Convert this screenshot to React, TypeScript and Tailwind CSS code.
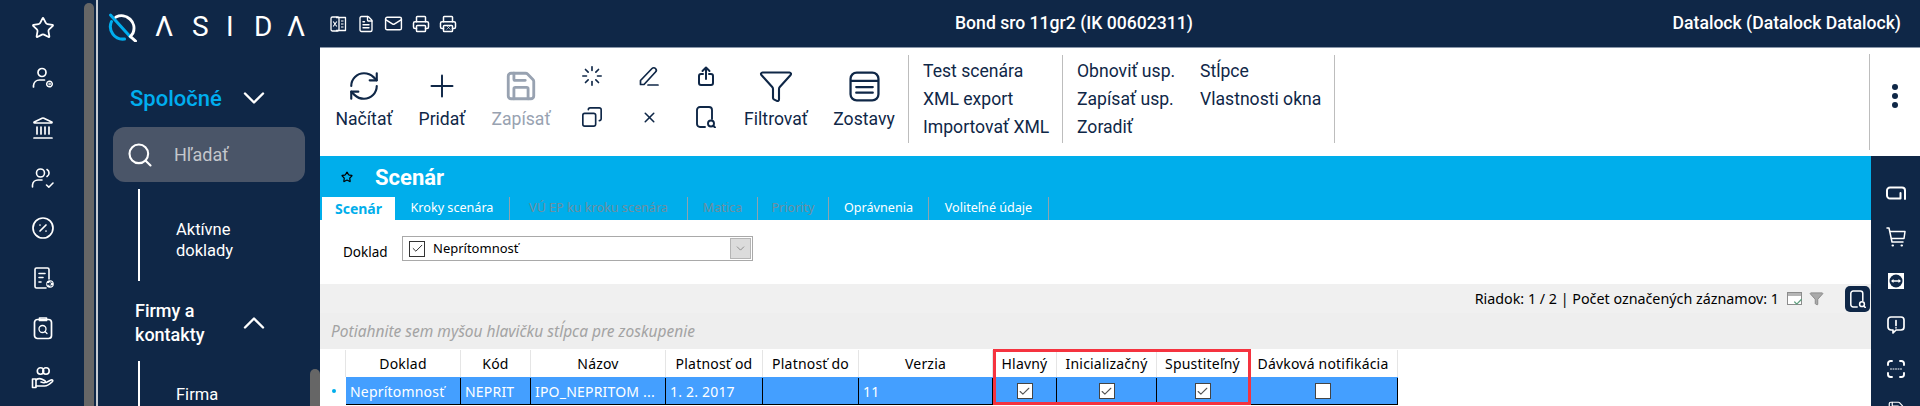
import {
  Star, Landmark, CirclePercent, ChevronDown, ChevronUp, Search,
  RefreshCw, Plus, Save, Loader, X, Funnel,
  FileText, Mail, Printer, Check, Copy,
} from "lucide-react";

const roboto = "font-['Roboto',sans-serif]";
const noto = "font-['Noto_Sans',sans-serif]";

function UserGear() {
  return (
    <svg viewBox="0 0 24 24" className="w-6 h-6" fill="none" stroke="currentColor" strokeWidth="1.7" strokeLinecap="round">
      <circle cx="11" cy="6.5" r="4" />
      <path d="M2.5 21v-1.5A6 6 0 0 1 8.5 14h5" />
      <circle cx="18.500" cy="18" r="2.800" strokeWidth="1.500" strokeDasharray="2 0.600" />
      <circle cx="18.500" cy="18" r="0.800" strokeWidth="1" />
    </svg>
  );
}

function UserTick() {
  return (
    <svg viewBox="0 0 24 24" className="w-6 h-6" fill="none" stroke="currentColor" strokeWidth="1.6" strokeLinecap="round" strokeLinejoin="round">
      <circle cx="9.5" cy="7" r="4" />
      <path d="M16 3.5a4 4 0 0 1 0 7" />
      <path d="M1.5 21v-2A5.5 5.5 0 0 1 7 14h4" />
      <path d="M15.5 19l2.3 2.2L22 17" />
    </svg>
  );
}

function ReceiptEuro() {
  return (
    <svg viewBox="0 0 24 24" className="w-6 h-6" fill="none" stroke="currentColor" strokeWidth="1.6" strokeLinecap="round" strokeLinejoin="round">
      <path d="M18 13V3.500A1.500 1.500 0 0 0 16.500 2h-11A1.500 1.500 0 0 0 4 3.500v17A1.500 1.500 0 0 0 5.500 22H15" />
      <path d="M8 7.500h6M8 11.500h4M8 16h2" />
      <circle cx="19" cy="18" r="3.800" fill="currentColor" stroke="none" />
      <path d="M21 16.300a2 2 0 1 0 0 3.400M16.500 17.500h3M16.500 18.700h3" stroke="#0f2747" strokeWidth="0.900" />
    </svg>
  );
}

function ClipboardSearch() {
  return (
    <svg viewBox="0 0 24 24" className="w-6 h-6" fill="none" stroke="currentColor" strokeWidth="1.7" strokeLinecap="round" strokeLinejoin="round">
      <rect x="3.500" y="3.500" width="17" height="19" rx="3" />
      <path d="M8.500 4.500V2h7v2.500h-7z" />
      <circle cx="11.500" cy="13" r="3.500" strokeWidth="1.300" />
      <path d="M14 15.500l2 2" strokeWidth="1.300" />
    </svg>
  );
}

function HandCircles() {
  return (
    <svg viewBox="0 0 24 24" className="w-6 h-6" fill="none" stroke="currentColor" strokeWidth="1.600" strokeLinecap="round" strokeLinejoin="round">
      <circle cx="9.500" cy="5" r="3.200" />
      <circle cx="15" cy="5" r="3.200" />
      <rect x="1.500" y="13" width="3.500" height="8.500" />
      <path d="M5 14c2-1.500 4-1.700 6-.7l2.500 1.200c1.500.7.800 2.500-.8 2.200L10 16M5 20h8.500c2 0 6-2.500 8-4.500.8-1-.2-2-1.500-1.500l-5 2.500" />
    </svg>
  );
}

function DocSearch({ className }: { className: string }) {
  return (
    <svg viewBox="0 0 20 22" className={className} fill="none" stroke="currentColor" strokeWidth="1.900" strokeLinecap="round" strokeLinejoin="round">
      <path d="M9 21H4a3 3 0 0 1-3-3V4a3 3 0 0 1 3-3h9a3 3 0 0 1 3 3v9" />
      <circle cx="15" cy="17.500" r="3" />
      <path d="M17.500 20l1.500 1.500" />
    </svg>
  );
}

function PenUnderline() {
  return (
    <svg viewBox="0 0 20 20" className="w-[20px] h-[20px]" fill="none" stroke="currentColor" strokeWidth="1.700" strokeLinecap="round" strokeLinejoin="round">
      <path d="M1.500 14.500L13 2.500a2.400 2.400 0 0 1 3.500 3.500L5 18.500H1.500v-4z" />
      <path d="M9 19h10" />
    </svg>
  );
}

function ShareBox() {
  return (
    <svg viewBox="0 0 16 20" className="w-[16px] h-[20px]" fill="none" stroke="currentColor" strokeWidth="2" strokeLinecap="round" strokeLinejoin="round">
      <path d="M5 8H3a2 2 0 0 0-2 2v7a2 2 0 0 0 2 2h10a2 2 0 0 0 2-2v-7a2 2 0 0 0-2-2h-2" />
      <path d="M8 13V1.500M4.500 5L8 1.500 11.500 5" />
    </svg>
  );
}

function Lines() {
  return (
    <svg viewBox="0 0 30 30" className="w-[31px] h-[31px]" fill="none" stroke="currentColor" strokeWidth="2.200" strokeLinecap="round">
      <rect x="1.500" y="1.500" width="27" height="27" rx="6" />
      <path d="M2 9.500h26M7 15.500h16M7 21h16" />
    </svg>
  );
}

function XlsFile() {
  return (
    <svg viewBox="0 0 18 18" className="w-[18px] h-[18px]" fill="none" stroke="currentColor" strokeWidth="1.300" strokeLinejoin="round">
      <path d="M6 2.500h9.500v13H6" />
      <rect x="1" y="2" width="8" height="14" rx="1.500" />
      <path d="M3.200 6.500l3.600 5M6.800 6.500l-3.600 5M11 6h2.500M11 9h2.500M11 12h2.500" strokeWidth="1.100" />
    </svg>
  );
}

function PrinterX() {
  return (
    <span className="relative flex">
      <Printer className="w-[18px] h-[18px]" strokeWidth={2} />
      <X className="absolute left-[6px] top-[9px] w-[7px] h-[7px]" strokeWidth={2} />
    </span>
  );
}

function Tablet() {
  return (
    <svg viewBox="0 0 20 14" className="w-[20px] h-[14px]" fill="none" stroke="currentColor" strokeWidth="2" strokeLinecap="round" strokeLinejoin="round">
      <path d="M19 13V4.500A3 3 0 0 0 16 1.500H4A3 3 0 0 0 1 4.500v5A3 3 0 0 0 4 12.500h10.500V7" />
    </svg>
  );
}

function Cart() {
  return (
    <svg viewBox="0 0 20 20" className="w-[20px] h-[20px]" fill="none" stroke="currentColor" strokeWidth="1.500" strokeLinecap="round" strokeLinejoin="round">
      <path d="M1 1h2l3 14h11" />
      <path d="M4 4.500h15l-1 7H5.500" />
      <path d="M6.500 18.500h.5M15.500 18.500h.5" strokeWidth="2" />
    </svg>
  );
}

function RemoteBadge() {
  return (
    <svg viewBox="0 0 16 16" className="w-[16px] h-[16px]">
      <rect width="16" height="16" fill="#fff" />
      <circle cx="8" cy="8" r="6.500" fill="#0f2747" />
      <path d="M3 8l2.500-2v1.300h5V6L13 8l-2.500 2V8.700h-5V10z" fill="#fff" />
    </svg>
  );
}

function Bubble() {
  return (
    <svg viewBox="0 0 18 18" className="w-[18px] h-[18px]" fill="none" stroke="currentColor" strokeWidth="1.700" strokeLinecap="round" strokeLinejoin="round">
      <path d="M4 1h10a3 3 0 0 1 3 3v7a3 3 0 0 1-3 3H9l-3 3v-3H4a3 3 0 0 1-3-3V4a3 3 0 0 1 3-3z" />
      <path d="M9 4.500v5M9 11.800v.01" />
    </svg>
  );
}

function ScanDots() {
  return (
    <svg viewBox="0 0 18 18" className="w-[18px] h-[18px]" fill="none" stroke="currentColor" strokeWidth="1.900" strokeLinecap="round">
      <path d="M1 5V3.500A2.500 2.500 0 0 1 3.500 1H5M13 1h1.500A2.500 2.500 0 0 1 17 3.500V5M17 13v1.500a2.500 2.500 0 0 1-2.500 2.500H13M5 17H3.500A2.500 2.500 0 0 1 1 14.500V13" />
      <path d="M3.500 9h11" strokeWidth="1" strokeDasharray="1 1.500" />
    </svg>
  );
}

function BigButton({ icon, label, width, muted }: { icon: React.ReactNode; label: string; width: string; muted?: boolean }) {
  return (
    <div className={`${width} shrink-0 flex flex-col items-center ${muted ? "text-[#98a2b1]" : "text-[#0f2747]"}`}>
      <div className="h-[32px] mt-[22px] flex items-center justify-center">{icon}</div>
      <span className="mt-[5px] text-[17.600px] leading-[24px]">{label}</span>
    </div>
  );
}

function SmallButtons({ width, top, bottom }: { width: string; top: React.ReactNode; bottom: React.ReactNode }) {
  return (
    <div className={`${width} shrink-0 flex flex-col items-center text-[#0f2747] pt-[17px]`}>
      <div className="h-[22px] flex items-center">{top}</div>
      <div className="h-[22px] mt-[19px] flex items-center">{bottom}</div>
    </div>
  );
}

function TextColumn({ items, width }: { items: string[]; width: string }) {
  return (
    <div className={`${width} shrink-0 flex flex-col pt-[9px] text-[#0f2747] text-[17.600px] leading-[28px]`}>
      {items.map((t) => (
        <span key={t} className="whitespace-nowrap">{t}</span>
      ))}
    </div>
  );
}

const logoLetters = [
  { ch: "Λ", w: "w-[37px]" },
  { ch: "S", w: "w-[34px]" },
  { ch: "I", w: "w-[28px]" },
  { ch: "D", w: "w-[33px]" },
  { ch: "Λ", w: "w-[21px]" },
];

const tabs = [
  { label: "Kroky scenára", w: "w-[115px]" },
  { label: "VÚ EP ku kroku scenára", w: "w-[178px]", off: true },
  { label: "Matica", w: "w-[70px]", off: true },
  { label: "Priority", w: "w-[71px]", off: true },
  { label: "Oprávnenia", w: "w-[100px]" },
  { label: "Voliteľné údaje", w: "w-[120px]" },
];

const columns = [
  { label: "Doklad", w: "w-[115px]", value: "Neprítomnosť" },
  { label: "Kód", w: "w-[70px]", value: "NEPRIT" },
  { label: "Názov", w: "w-[135px]", value: "IPO_NEPRITOM ..." },
  { label: "Platnosť od", w: "w-[97px]", value: "1. 2. 2017" },
  { label: "Platnosť do", w: "w-[96px]", value: "" },
  { label: "Verzia", w: "w-[134px]", value: "11" },
];

const checks = [
  { label: "Hlavný", w: "w-[64px]", on: true },
  { label: "Inicializačný", w: "w-[100px]", on: true },
  { label: "Spustiteľný", w: "w-[92px]", on: true },
  { label: "Dávková notifikácia", w: "w-[149px]", on: false },
];

function CheckCell({ on, w }: { on: boolean; w: string }) {
  return (
    <div className={`${w} shrink-0 h-full flex items-center justify-center border-r border-black`}>
      <span className="w-[16px] h-[16px] bg-white border border-[#444] flex items-center justify-center text-[#555]">
        {on && <Check className="w-[13px] h-[13px]" strokeWidth={2} />}
      </span>
    </div>
  );
}

export default function App() {
  return (
    <div className={`w-[1920px] h-[406px] overflow-hidden flex bg-[#0f2747] text-white ${roboto}`}>
      {/* Icon rail */}
      <aside className="w-[96px] h-full shrink-0 flex relative">
        <div className="w-[84px] flex flex-col items-center gap-[26px] pt-[16px] pl-[2px]">
          <Star className="w-6 h-6" strokeWidth={1.8} />
          <UserGear />
          <Landmark className="w-6 h-6" strokeWidth={1.7} />
          <UserTick />
          <CirclePercent className="w-6 h-6" strokeWidth={1.7} />
          <ReceiptEuro />
          <ClipboardSearch />
          <HandCircles />
        </div>
        <div className="w-[10px] h-[420px] mt-[3px] rounded-t-[5px] bg-[#666666]" />
      </aside>
      <div className="w-[2px] h-full shrink-0 bg-[#c7ccd3]" />

      {/* Module menu */}
      <nav className="w-[222px] h-full shrink-0 relative">
        <div className="flex items-center h-[48px] pl-[10px] pt-[6px]">
          <svg viewBox="0 0 30 30" className="w-[30px] h-[30px] shrink-0" fill="none" strokeWidth="3" strokeLinecap="round">
            <path d="M3.500 9.500a12.500 12.500 0 0 0 13 17.500" stroke="#00aeef" />
            <path d="M2.500 3l20 22" stroke="#00aeef" />
            <path d="M8 5a12.500 12.500 0 0 1 17 16l-2.500 3.500 5 4.500" stroke="#ffffff" />
          </svg>
          <div className="ml-[17px] flex text-[28px] leading-none whitespace-nowrap">
            {logoLetters.map((l, i) => (
              <span key={i} className={`${l.w} shrink-0`}>{l.ch}</span>
            ))}
          </div>
        </div>
        <div className="flex items-center pl-[32px] mt-[36px] h-[28px]">
          <span className="w-[106px] text-[22px] font-medium text-[#00aeef] whitespace-nowrap">Spoločné</span>
          <ChevronDown className="w-[36px] h-[36px] shrink-0" strokeWidth={1.600} />
        </div>
        <div className="ml-[15px] mt-[15px] w-[192px] h-[55px] rounded-[12px] bg-[#4a5568] flex items-center pl-[13px]">
          <Search className="w-[28px] h-[28px]" strokeWidth={1.8} />
          <span className="ml-[20px] text-[18px] text-[#c4c7cc]">Hľadať</span>
        </div>
        <div className="ml-[40px] mt-[7px] h-[92px] border-l-2 border-white pl-[36px] pt-[30px] text-[16.500px] leading-[21px]">
          Aktívne<br />doklady
        </div>
        <div className="flex items-center pl-[37px] mt-[18px]">
          <span className="w-[101px] text-[18px] leading-[24px] font-medium">Firmy a<br />kontakty</span>
          <ChevronUp className="w-[36px] h-[36px] shrink-0" strokeWidth={1.600} />
        </div>
        <div className="ml-[40px] mt-[14px] h-[60px] border-l-2 border-white pl-[36px] pt-[23px] text-[16.500px] leading-[21px]">
          Firma
        </div>
        <div className="absolute right-0 top-[369px] w-[10px] h-[60px] rounded-t-[5px] bg-[#666666]" />
      </nav>

      {/* Main */}
      <main className="flex-1 min-w-0 h-full flex flex-col">
        <header className="h-[48px] shrink-0 border-b border-[#8a97aa] flex items-center text-[17.600px] font-medium">
          <div className="w-[635px] pl-[10px] flex items-center gap-[9px] shrink-0">
            <XlsFile />
            <FileText className="w-[18px] h-[18px]" strokeWidth={1.800} />
            <Mail className="w-[19px] h-[19px]" strokeWidth={1.800} />
            <Printer className="w-[18px] h-[18px]" strokeWidth={2} />
            <PrinterX />
          </div>
          <span className="whitespace-nowrap">Bond sro 11gr2 (IK 00602311)</span>
          <span className="ml-auto pr-[19px] whitespace-nowrap">Datalock (Datalock Datalock)</span>
        </header>

        <div className="h-[108px] shrink-0 bg-white flex">
          <BigButton width="w-[88px]" label="Načítať" icon={<RefreshCw className="w-[34px] h-[34px]" strokeWidth={1.500} />} />
          <BigButton width="w-[68px]" label="Pridať" icon={<Plus className="w-[36px] h-[36px]" strokeWidth={1.300} />} />
          <BigButton width="w-[90px]" muted label="Zapísať" icon={<Save className="w-[34px] h-[34px]" strokeWidth={2} />} />
          <SmallButtons width="w-[52px]" top={<Loader className="w-[22px] h-[22px]" strokeWidth={1.800} />} bottom={<Copy className="w-[22px] h-[22px] -scale-x-100" strokeWidth={1.800} />} />
          <SmallButtons width="w-[62px]" top={<PenUnderline />} bottom={<X className="w-[17px] h-[17px]" strokeWidth={2.200} />} />
          <SmallButtons width="w-[52px]" top={<ShareBox />} bottom={<DocSearch className="w-[20px] h-[22px]" />} />
          <BigButton width="w-[88px]" label="Filtrovať" icon={<Funnel className="w-[36px] h-[36px]" strokeWidth={1.400} />} />
          <BigButton width="w-[88px]" label="Zostavy" icon={<Lines />} />
          <div className="w-px h-[88px] mt-[7px] shrink-0 bg-[#bdbdbd]" />
          <div className="w-[14px] shrink-0" />
          <TextColumn width="w-[139px]" items={["Test scenára", "XML export", "Importovať XML"]} />
          <div className="w-px h-[88px] mt-[7px] shrink-0 bg-[#bdbdbd]" />
          <div className="w-[14px] shrink-0" />
          <TextColumn width="w-[123px]" items={["Obnoviť usp.", "Zapísať usp.", "Zoradiť"]} />
          <TextColumn width="w-[134px]" items={["Stĺpce", "Vlastnosti okna"]} />
          <div className="w-px h-[88px] mt-[7px] shrink-0 bg-[#bdbdbd]" />
          <div className="ml-auto w-[51px] h-[96px] mt-[6px] border-l border-[#bdbdbd] flex flex-col items-center pt-[30px] gap-[3px]">
            <span className="w-[6px] h-[6px] rounded-full bg-[#0f2747]" />
            <span className="w-[6px] h-[6px] rounded-full bg-[#0f2747]" />
            <span className="w-[6px] h-[6px] rounded-full bg-[#0f2747]" />
          </div>
        </div>

        <div className="flex-1 min-h-0 flex">
          <section className="flex-1 min-w-0 bg-white text-black">
            {/* Title and tabs */}
            <div className="h-[64px] bg-[#00aeeb] flex flex-col">
              <div className="h-[41px] flex items-center pl-[21px]">
                <Star className="w-[12px] h-[12px] text-black" strokeWidth={2.400} />
                <span className="ml-[22px] mt-[1px] text-white text-[22px] font-bold">Scenár</span>
              </div>
              <div className={`flex h-[23px] text-[12.600px] ${noto}`}>
                <div className="w-[2px]" />
                <div className="w-[73px] bg-white text-[#00aeeb] text-[14px] font-bold flex items-center justify-center">Scenár</div>
                {tabs.map((t) => (
                  <div key={t.label} className={`${t.w} shrink-0 h-full border-r border-[#8fa3ae] flex items-center justify-center whitespace-nowrap ${t.off ? "text-[#6f8ea0]" : "text-white"}`}>
                    {t.label}
                  </div>
                ))}
              </div>
            </div>

            {/* Filter */}
            <div className={`h-[64px] flex items-start pl-[23px] pt-[16px] text-[13.500px] ${noto}`}>
              <span className="w-[59px] leading-[32px]">Doklad</span>
              <div className="w-[351px] h-[25px] border border-[#a9a9a9] flex items-center pl-[6px] pr-[1px]">
                <span className="w-[16px] h-[16px] border border-[#333] flex items-center justify-center">
                  <Check className="w-[13px] h-[13px]" strokeWidth={1.500} />
                </span>
                <span className="ml-[8px] text-[13px] flex-1">Neprítomnosť</span>
                <span className="w-[21px] h-[21px] bg-[#dcdcdc] border border-[#b5b5b5] flex items-center justify-center">
                  <ChevronDown className="w-[13px] h-[13px] text-[#666]" strokeWidth={1.200} />
                </span>
              </div>
            </div>

            {/* Grid status and group panel */}
            <div className={`h-[65px] bg-[#eeeeee] ${noto}`}>
              <div className="h-[29px] bg-[#f0f0f0] flex items-center justify-end text-[14.300px] pr-[1px]">
                <span className="whitespace-nowrap">Riadok: 1 / 2 | Počet označených záznamov: 1</span>
                <span className="ml-[8px] w-[15px] h-[13px] border border-[#8c8c8c] bg-[linear-gradient(#b5b5b5_3px,#ffffff_3px)] relative">
                  <Check className="absolute -right-[2px] -bottom-[3px] w-[10px] h-[10px] text-[#5f9f7f]" strokeWidth={3} />
                </span>
                <Funnel className="ml-[7px] w-[15px] h-[15px] text-[#888] fill-[#aaa]" strokeWidth={1.500} />
                <span className="ml-[21px] w-[25px] h-[26px] rounded-[5px] bg-[#0f2747] text-white flex items-center justify-center">
                  <DocSearch className="w-[16px] h-[18px]" />
                </span>
              </div>
              <div className="h-[36px] pl-[11px] pt-[4px] text-[15.500px] leading-[28px] italic text-[#a3a3a3] whitespace-nowrap">
                Potiahnite sem myšou hlavičku stĺpca pre zoskupenie
              </div>
            </div>

            {/* Grid */}
            <div className={`relative w-[1078px] ${noto}`}>
              <div className="flex h-[28px] pt-px text-[14px] tracking-[0.200px]">
                <div className="w-[26px] shrink-0 border-r border-[#e5e5e5]" />
                {columns.map((c) => (
                  <div key={c.label} className={`${c.w} shrink-0 border-r border-[#e5e5e5] flex items-center justify-center whitespace-nowrap`}>{c.label}</div>
                ))}
                {checks.map((c) => (
                  <div key={c.label} className={`${c.w} shrink-0 border-r border-[#e5e5e5] flex items-center justify-center whitespace-nowrap`}>{c.label}</div>
                ))}
              </div>
              <div className="flex h-[28px]">
                <div className="w-[26px] shrink-0 flex items-center justify-center pl-[1px]">
                  <span className="w-[4px] h-[4px] rounded-full bg-[#00aeeb]" />
                </div>
                <div className="flex h-full pt-px bg-[#449fff] border-b border-black text-white text-[14px] tracking-[0.200px]">
                  {columns.map((c) => (
                    <div key={c.label} className={`${c.w} shrink-0 h-full border-r border-black flex items-center px-[4px] whitespace-nowrap overflow-hidden`}>{c.value}</div>
                  ))}
                  {checks.map((c) => (
                    <CheckCell key={c.label} on={c.on} w={c.w} />
                  ))}
                </div>
              </div>
              {/* Highlight drawn over the three flag columns */}
              <div className="absolute left-[673px] top-0 w-[258px] h-[56px] border-[3px] border-[#f5333f]" />
            </div>
          </section>

          {/* Right rail */}
          <aside className="w-[49px] h-full shrink-0 flex flex-col items-center pt-[15px]">
            <div className="h-[44px] shrink-0 flex items-center"><Tablet /></div>
            <div className="h-[44px] shrink-0 flex items-center"><Cart /></div>
            <div className="h-[44px] shrink-0 flex items-center"><RemoteBadge /></div>
            <div className="h-[44px] shrink-0 flex items-center"><Bubble /></div>
            <div className="h-[44px] shrink-0 flex items-center"><ScanDots /></div>
            <div className="h-[30px] shrink-0 pt-[9px]"><Save className="w-[18px] h-[18px]" strokeWidth={1.600} /></div>
          </aside>
        </div>
      </main>
    </div>
  );
}
